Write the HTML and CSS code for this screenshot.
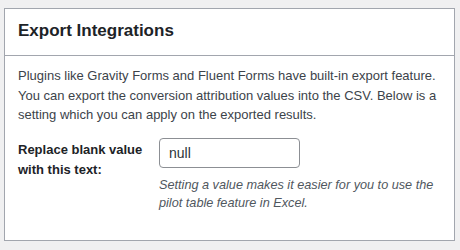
FILE: index.html
```html
<!DOCTYPE html>
<html lang="en">
<head>
  <meta charset="UTF-8" />
  <title>Export Integrations</title>
  <link rel="stylesheet" href="styles.css">
</head>
<body>
  <div class="postbox">
    <div class="postbox-header">
      <h2>Export Integrations</h2>
    </div>
    <div class="inside">
      <p>Plugins like Gravity Forms and Fluent Forms have built-in export feature. You can export the conversion attribution values into the CSV. Below is a setting which you can apply on the exported results.</p>

      <div class="form-row">
        <label class="form-label" for="blank-value">Replace blank value with this text:</label>
        <div class="form-field">
          <input type="text" id="blank-value" value="null">
          <p class="description">Setting a value makes it easier for you to use the pilot table feature in Excel.</p>
        </div>
      </div>
    </div>
  </div>
</body>
</html>
```

FILE: styles.css
```css
body {
  margin: 0;
  padding: 8px 5px 9px 4px;
  background: #f0f0f1;
  font-family: "Liberation Sans", Arial, sans-serif;
  font-size: 13px;
  line-height: 1.5;
  color: #3c434a;
}

.postbox {
  background: #fff;
  border: 1px solid #a2a6ae;
  height: 233px;
  box-sizing: border-box;
}

.postbox-header {
  border-bottom: 1px solid #a2a6ae;
  padding: 0 13px 2px;
  height: 47px;
  box-sizing: border-box;
  display: flex;
  align-items: center;
}

.postbox-header h2 {
  margin: 0;
  font-size: 17px;
  font-weight: 700;
  color: #1d2327;
}

.inside {
  padding: 10px 13px 0;
}

.inside p {
  margin: 0;
}

.form-row {
  display: flex;
  margin-top: 13px;
}

.form-label {
  width: 141px;
  flex-shrink: 0;
  font-size: 13px;
  font-weight: 700;
  color: #1d2327;
  line-height: 20px;
  padding-top: 2px;
}

.form-field input {
  display: block;
  width: 141px;
  height: 30px;
  box-sizing: border-box;
  border: 1px solid #8c8f94;
  border-radius: 4px;
  padding: 0 9px;
  font-family: inherit;
  font-size: 14px;
  color: #2c3338;
}

.inside .description {
  margin-top: 8px;
  font-size: 12.7px;
  line-height: 18px;
  font-style: italic;
  color: #50575e;
}
```
